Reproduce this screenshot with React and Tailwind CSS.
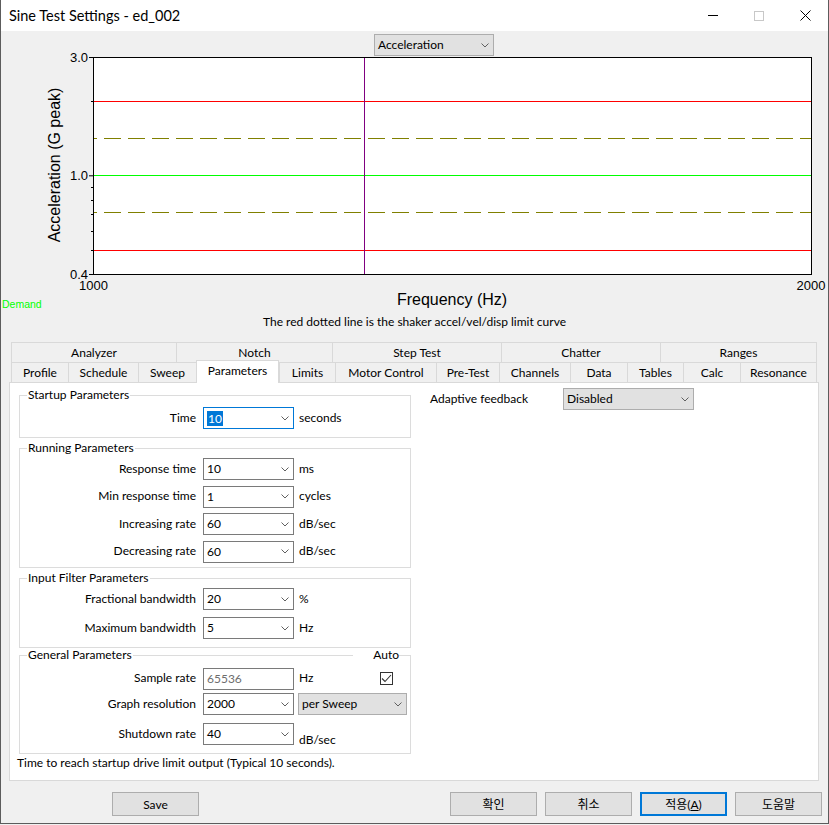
import React from "react";

const UI_FONT = "font-['Lato','Noto_Sans_CJK_KR',sans-serif]";
const CHART_FONT = "Liberation Sans, Arial, sans-serif";

const TAB_ROW1 = [
  { label: "Analyzer", w: "w-[165px]" },
  { label: "Notch", w: "w-[156px]" },
  { label: "Step Test", w: "w-[169px]" },
  { label: "Chatter", w: "w-[159px]" },
  { label: "Ranges", w: "w-[157px]" },
];

const TAB_ROW2 = [
  { label: "Profile", w: "w-[57px]" },
  { label: "Schedule", w: "w-[70px]" },
  { label: "Sweep", w: "w-[58px]" },
  { label: "Parameters", w: "w-[83px]", active: true },
  { label: "Limits", w: "w-[56px]" },
  { label: "Motor Control", w: "w-[101px]" },
  { label: "Pre-Test", w: "w-[63px]" },
  { label: "Channels", w: "w-[71px]" },
  { label: "Data", w: "w-[57px]" },
  { label: "Tables", w: "w-[56px]" },
  { label: "Calc", w: "w-[57px]" },
  { label: "Resonance", w: "w-[77px]" },
];

// log axis 0.4 .. 3.0 mapped onto the plot box (page px)
const yOf = (v) => 57.5 + ((Math.log10(3) - Math.log10(v)) / (Math.log10(3) - Math.log10(0.4))) * 217;

function Chevron() {
  return (
    <svg width="8" height="5" viewBox="0 0 8 5" className="shrink-0">
      <path d="M0.5 0.5 L4 4 L7.5 0.5" fill="none" stroke="#606060" strokeWidth="1" />
    </svg>
  );
}

function Combo({ value, w = "w-[91px]", grey, focused, highlight }) {
  return (
    <div
      className={`${w} h-[22px] shrink-0 flex items-center pl-[3px] pr-[4px] border ${
        focused ? "border-[#0078d7] bg-white" : grey ? "border-[#adadad] bg-[#e1e1e1]" : "border-[#7a7a7a] bg-white"
      }`}
    >
      {highlight ? (
        <span className="bg-[#0078d7] text-white px-[1px] leading-[15px]">{value}</span>
      ) : (
        <span className="leading-[15px] mb-[1px]">{value}</span>
      )}
      <span className="ml-auto">
        <Chevron />
      </span>
    </div>
  );
}

function Row({ label, children, className = "" }) {
  return (
    <div className={`flex items-center ${className}`}>
      <div className="w-[176px] text-right leading-[15px] mb-[2px]">{label}</div>
      <div className="ml-[7px] flex items-center">{children}</div>
    </div>
  );
}

function Unit({ children, className = "" }) {
  return <span className={`ml-[5px] leading-[15px] ${className}`}>{children}</span>;
}

function GroupBox({ title, extra, className = "", bodyClass = "", children }) {
  return (
    <div className={`flex flex-col ${className}`}>
      <div className="flex h-[14px]">
        <div className="w-[8px] mt-[7px] border-l border-t border-[#dcdcdc]" />
        <span className="px-[1px] leading-[13px]">{title}</span>
        {extra ? (
          <>
            <div className="flex-1 mt-[7px] border-t border-[#dcdcdc]" />
            <div className="w-[20px]" />
            <span className="leading-[13px]">{extra}</span>
            <div className="w-[12px] mt-[7px] border-t border-r border-[#dcdcdc]" />
          </>
        ) : (
          <div className="flex-1 mt-[7px] border-t border-r border-[#dcdcdc]" />
        )}
      </div>
      <div className={`border-x border-b border-[#dcdcdc] ${bodyClass}`}>{children}</div>
    </div>
  );
}

function Button({ children, isDefault, className = "" }) {
  return (
    <div
      className={`h-[24px] flex items-center justify-center bg-[#e1e1e1] leading-[15px] ${
        isDefault ? "border-2 border-[#0078d7]" : "border border-[#adadad]"
      } ${className}`}
    >
      {children}
    </div>
  );
}

function Chart() {
  const minor = [2, 0.9, 0.8, 0.7, 0.6, 0.5];
  const major = [3, 1, 0.4];
  return (
    <svg width="827" height="234" viewBox="1 57 827 234" className="block overflow-visible">
      <g fontFamily={CHART_FONT} fontSize="13" fill="#000">
        <text x="88" y="62" textAnchor="end">3.0</text>
        <text x="88" y="179.5" textAnchor="end">1.0</text>
        <text x="88" y="278.5" textAnchor="end">0.4</text>
        <text x="93.5" y="290" textAnchor="middle">1000</text>
        <text x="811" y="290" textAnchor="middle">2000</text>
      </g>
      <text
        transform="translate(60,165) rotate(-90)"
        textAnchor="middle"
        fontFamily={CHART_FONT}
        fontSize="16"
        fill="#000"
      >
        Acceleration (G peak)
      </text>
      <rect x="93.5" y="57.5" width="718" height="217" fill="#fff" stroke="#000" strokeWidth="1" />
      {major.map((v) => (
        <line key={v} x1="89" x2="93" y1={yOf(v)} y2={yOf(v)} stroke="#000" />
      ))}
      {minor.map((v) => (
        <line key={v} x1="91" x2="93" y1={Math.round(yOf(v)) + 0.5} y2={Math.round(yOf(v)) + 0.5} stroke="#000" />
      ))}
      <line x1="94" x2="811" y1="101.5" y2="101.5" stroke="#ff0000" />
      <line x1="94" x2="811" y1="250.5" y2="250.5" stroke="#ff0000" />
      <line x1="94" x2="811" y1="175.5" y2="175.5" stroke="#00ff00" />
      <line x1="94" x2="811" y1="138.5" y2="138.5" stroke="#808000" strokeDasharray="17 7" strokeDashoffset="14" />
      <line x1="94" x2="811" y1="212.5" y2="212.5" stroke="#808000" strokeDasharray="17 7" strokeDashoffset="14" />
      <line x1="364.5" x2="364.5" y1="58" y2="274" stroke="#800080" />
    </svg>
  );
}

export default function App() {
  return (
    <div className={`w-[829px] h-[825px] bg-[#f0f0f0] text-[12px] text-black ${UI_FONT}`}>
      <div className="h-[824px] border-x border-b border-[#5c5c5c] flex flex-col">
        {/* title bar */}
        <div className="h-[31px] bg-white flex items-center shrink-0">
          <span className="pl-[8px] text-[14.5px] leading-[20px]">Sine Test Settings - ed_002</span>
          <div className="ml-auto flex h-full">
            <div className="w-[46px] h-full flex items-center justify-center">
              <div className="w-[10px] h-px bg-black" />
            </div>
            <div className="w-[46px] h-full flex items-center justify-center">
              <div className="w-[10px] h-[10px] border border-[#c8c8c8]" />
            </div>
            <div className="w-[46px] h-full flex items-center justify-center">
              <svg width="11" height="11" viewBox="0 0 11 11">
                <path d="M0.5 0.5 L10.5 10.5 M10.5 0.5 L0.5 10.5" stroke="#000" strokeWidth="1" fill="none" />
              </svg>
            </div>
          </div>
        </div>

        {/* graph */}
        <div className="pt-[3px] pl-[373px] h-[26px]">
          <Combo value="Acceleration" w="w-[120px]" grey />
        </div>
        <Chart />
        <div className="grid grid-cols-[92px_718px]">
          <span className="mt-[7px] pl-[1px] text-[10.5px] leading-[12px] text-[#00ff00] font-['Liberation_Sans',Arial,sans-serif]">
            Demand
          </span>
          <span className="text-center text-[16px] leading-[18px] font-['Liberation_Sans',Arial,sans-serif]">
            Frequency (Hz)
          </span>
        </div>
        <div className="mt-[4px] text-center leading-[15px]">
          The red dotted line is the shaker accel/vel/disp limit curve
        </div>

        {/* tabs */}
        <div className="mt-[13px] ml-[10px] flex flex-col">
          <div className="flex h-[20px]">
            {TAB_ROW1.map((t, i) => (
              <div
                key={t.label}
                className={`${t.w} h-full flex items-center justify-center pb-[1px] border-l border-t border-[#d9d9d9] leading-[15px] ${
                  i === TAB_ROW1.length - 1 ? "border-r" : ""
                }`}
              >
                {t.label}
              </div>
            ))}
          </div>
          <div className="flex items-end h-[20px]">
            {TAB_ROW2.map((t, i) =>
              t.active ? (
                <div
                  key={t.label}
                  className={`${t.w} h-[23px] -mb-px relative z-10 bg-white flex items-center justify-center pb-[3px] border-x border-t border-[#d9d9d9] leading-[15px]`}
                >
                  {t.label}
                </div>
              ) : (
                <div
                  key={t.label}
                  className={`${t.w} h-[20px] flex items-center justify-center pb-[1px] border-l border-t border-[#d9d9d9] leading-[15px] ${
                    i === TAB_ROW2.length - 1 ? "border-r" : ""
                  }`}
                >
                  {t.label}
                </div>
              )
            )}
          </div>
        </div>

        {/* tab page */}
        <div className="ml-[8px] w-[810px] h-[399px] bg-white border border-[#d9d9d9] flex pt-[5px]">
          <div className="ml-[9px] w-[392px] flex flex-col">
            <GroupBox title="Startup Parameters" bodyClass="pt-[5px] pb-[8px]">
              <Row label="Time">
                <Combo value="10" focused highlight />
                <Unit className="mb-[2px]">seconds</Unit>
              </Row>
            </GroupBox>

            <GroupBox title="Running Parameters" className="mt-[3px]" bodyClass="pt-[3px] pb-[4.5px] flex flex-col gap-[5.5px]">
              <Row label="Response time">
                <Combo value="10" />
                <Unit className="mb-[2px]">ms</Unit>
              </Row>
              <Row label="Min response time">
                <Combo value="1" />
                <Unit className="mb-[2px]">cycles</Unit>
              </Row>
              <Row label="Increasing rate">
                <Combo value="60" />
                <Unit className="mb-[2px]">dB/sec</Unit>
              </Row>
              <Row label="Decreasing rate">
                <Combo value="60" />
                <Unit className="mb-[2px]">dB/sec</Unit>
              </Row>
            </GroupBox>

            <GroupBox title="Input Filter Parameters" className="mt-[3px]" bodyClass="pt-[3px] pb-[8px] flex flex-col gap-[7px]">
              <Row label="Fractional bandwidth">
                <Combo value="20" />
                <Unit className="mb-[2px]">%</Unit>
              </Row>
              <Row label="Maximum bandwidth">
                <Combo value="5" />
                <Unit className="mb-[2px]">Hz</Unit>
              </Row>
            </GroupBox>

            <GroupBox title="General Parameters" extra="Auto" bodyClass="pt-[5.5px] pb-[7.5px] flex flex-col">
              <div className="flex items-center">
                <Row label="Sample rate">
                  <div className="w-[91px] h-[22px] border border-[#7a7a7a] bg-white flex items-center pl-[3px] text-[#6d6d6d]">
                    <span className="leading-[15px] mb-[1px]">65536</span>
                  </div>
                  <Unit className="ml-[4px] mb-[2px]">Hz</Unit>
                </Row>
                <div className="ml-auto mr-[17px] w-[13px] h-[13px] border border-[#333] bg-white flex items-center justify-center">
                  <svg width="11" height="9" viewBox="0 0 11 9">
                    <path d="M1 4.5 L4 7.5 L10 1" fill="none" stroke="#333" strokeWidth="1.1" />
                  </svg>
                </div>
              </div>
              <Row label="Graph resolution" className="mt-[3.5px]">
                <Combo value="2000" />
                <div className="ml-[4px]">
                  <Combo value="per Sweep" w="w-[109px]" grey />
                </div>
              </Row>
              <Row label="Shutdown rate" className="mt-[8px]">
                <Combo value="40" />
                <Unit className="self-end -mb-[2px]">dB/sec</Unit>
              </Row>
            </GroupBox>

            <div className="mt-[1px] -ml-[2px] leading-[15px]">Time to reach startup drive limit output (Typical 10 seconds).</div>
          </div>

          <div className="ml-[19px] flex items-center self-start">
            <div className="w-[133px] leading-[15px] mb-[2px]">Adaptive feedback</div>
            <Combo value="Disabled" w="w-[131px]" grey />
          </div>
        </div>

        {/* dialog buttons */}
        <div className="mt-[11px] flex pr-[6px]">
          <Button className="ml-[111px] w-[87px]">Save</Button>
          <div className="ml-auto flex gap-[8px]">
            <Button className="w-[87px]">확인</Button>
            <Button className="w-[87px]">취소</Button>
            <Button className="w-[87px]" isDefault>
              <span>
                적용(<span className="underline">A</span>)
              </span>
            </Button>
            <Button className="w-[87px]">도움말</Button>
          </div>
        </div>
      </div>
    </div>
  );
}
